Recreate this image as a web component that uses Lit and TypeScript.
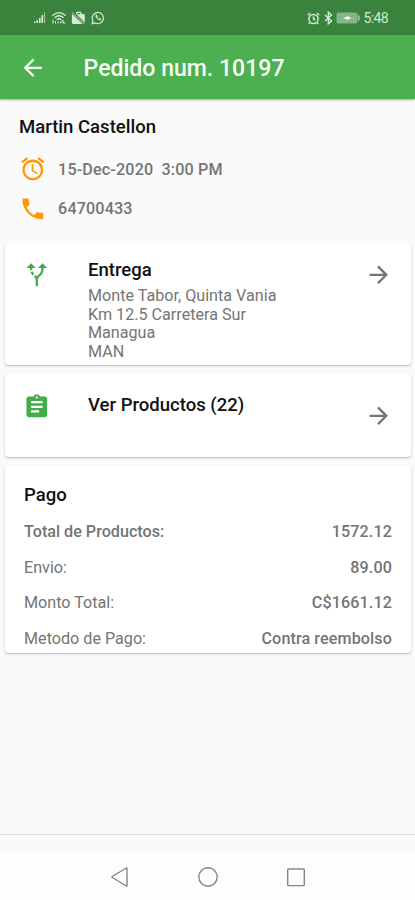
import { LitElement, html, css, svg } from "lit";
import { customElement, property } from "lit/decorators.js";

const ICONS: Record<string, string> = {
  back: "M20 11H7.83l5.59-5.59L12 4l-8 8 8 8 1.41-1.41L7.83 13H20v-2z",
  forward: "M12 4l-1.41 1.41L16.17 11H4v2h12.17l-5.58 5.59L12 20l8-8z",
  alarm:
    "M22 5.72l-4.6-3.86-1.29 1.53 4.6 3.86L22 5.72zM7.88 3.39L6.6 1.86 2 5.71l1.29 1.53 4.59-3.85zM12.5 8H11v6l4.75 2.85.75-1.23-4-2.37V8zM12 4c-4.97 0-9 4.03-9 9s4.02 9 9 9c4.97 0 9-4.03 9-9s-4.03-9-9-9zm0 16c-3.87 0-7-3.13-7-7s3.13-7 7-7 7 3.13 7 7-3.13 7-7 7z",
  phone:
    "M6.62 10.79c1.44 2.83 3.76 5.14 6.59 6.59l2.2-2.2c.27-.27.67-.36 1.02-.24 1.12.37 2.33.57 3.57.57.55 0 1 .45 1 1V20c0 .55-.45 1-1 1-9.39 0-17-7.61-17-17 0-.55.45-1 1-1h3.5c.55 0 1 .45 1 1 0 1.25.2 2.45.57 3.57.11.35.03.74-.25 1.02l-2.2 2.2z",
  route:
    "M9.78 11.16l-1.42 1.42c-.68-.69-1.34-1.58-1.79-2.94l1.94-.49c.32.89.77 1.5 1.27 2.01zM11 6L7 2 3 6h3.02c.02.81.08 1.54.19 2.17l1.94-.49C8.08 7.2 8.03 6.63 8.02 6H11zm10 0l-4-4-4 4h2.99c-.1 3.68-1.28 4.75-2.54 5.88-.5.44-1.01.92-1.45 1.55-.34-.49-.73-.88-1.13-1.24L9.46 13.6c.93.85 1.54 1.54 1.54 3.4v5h2v-5c0-2.02.71-2.66 1.79-3.63 1.38-1.24 3.08-2.78 3.2-7.37H21z",
  assignment:
    "M19 3h-4.18C14.4 1.84 13.3 1 12 1c-1.3 0-2.4.84-2.82 2H5c-1.1 0-2 .9-2 2v14c0 1.1.9 2 2 2h14c1.1 0 2-.9 2-2V5c0-1.1-.9-2-2-2zm-7 0c.55 0 1 .45 1 1s-.45 1-1 1-1-.45-1-1 .45-1 1-1zm2 14H7v-2h7v2zm3-4H7v-2h10v2zm0-4H7V7h10v2z",
};

@customElement("md-icon")
export class MdIcon extends LitElement {
  @property() name = "";
  static styles = css`
    :host { display: block; flex: none; width: 27.6px; height: 27.6px; }
    svg { display: block; width: 100%; height: 100%; fill: currentColor; }
  `;
  render() {
    return html`<svg viewBox="0 0 24 24">${svg`<path d=${ICONS[this.name]} />`}</svg>`;
  }
}

@customElement("status-bar")
export class StatusBar extends LitElement {
  static styles = css`
    :host {
      display: flex; justify-content: space-between; align-items: center;
      height: 35px; box-sizing: border-box; padding: 1px 27px 0 33px;
      background: #39833c; color: #d5ead6;
    }
    .group { display: flex; align-items: center; }
    svg { display: block; }
    .left { gap: 4.5px; }
    .alarm { margin-right: 4px; }
    .bt { margin-right: 3px; }
    .battery { margin-right: 4px; }
    .time { font-size: 14px; line-height: 16px; width: 24.5px; letter-spacing: -0.6px; white-space: nowrap; }
  `;
  render() {
    return html`
      <div class="group left">
        <svg width="13" height="14" viewBox="0 0 13 14" fill="currentColor">
          <path d="M1 10.5h1.6V12H1zM3.5 9h1.6v3H3.5zM6 7h1.6v5H6zM8.4 4.3H10V12H8.4z" />
          <path d="M10.8 1.5h1.3V12h-1.3z" opacity=".6" />
        </svg>
        <svg width="16" height="14" viewBox="0 0 16 14" fill="none" stroke="currentColor" stroke-width="1.3">
          <path d="M1.3 4.8Q8-1.5 14.7 4.8M3.5 6.8Q8 2.8 12.5 6.8M5.7 8.8Q8 6.8 10.3 8.8" />
          <path d="M2 8.5v4M4.5 10v2.5M7.2 10.5v2M9.3 12.2l1.5-2M12 9v3.5M12 12h2.5" stroke-width="1.1" />
        </svg>
        <svg width="15" height="14" viewBox="0 0 15 14" fill="currentColor">
          <path d="M4.200 3H5V1.800Q5 .7 6.100.7h3.200q1.100 0 1.100 1.100V3h2.200q1.200 0 1.200 1.200v7.600L5.500 3.200h3.500V2H6.300v1.200zM.9 2.800l10.800 10.100H2.100Q.9 12.900.9 11.700z" />
          <path d="M.9 1.200l12.800 12" fill="none" stroke="currentColor" stroke-width=".7" />
        </svg>
        <svg width="14" height="14" viewBox="0 0 14 14" fill="none" stroke="currentColor" stroke-width="1.2">
          <path d="M1.1 12.7l.8-3A5.6 5.6 0 1 1 4.2 12z" />
          <path d="M4.8 4q-.8 1.3.8 3.1t3.7 2.1l.9-1.1-1.5-.8-.8.7Q6.7 7.5 6.1 6.2l.5-.7-.7-1.5z" fill="currentColor" stroke-width=".4" />
        </svg>
      </div>
      <div class="group">
        <svg class="alarm" width="13" height="13" viewBox="0 0 13 13" fill="none" stroke="currentColor" stroke-width="1.5">
          <circle cx="6.5" cy="7" r="4.6" />
          <path d="M.8 3.2L3.200 1M12.200 3.200L9.800 1M6.500 4.500V7l1.700 1M2.800 10.800l-1 1.200M10.200 10.800l1 1.200" />
        </svg>
        <svg class="bt" width="9" height="14" viewBox="0 0 9 14" fill="none" stroke="currentColor" stroke-width="1.4">
          <path d="M1 4l6.500 6L4.300 12.800V1.200L7.500 4 1 10" />
        </svg>
        <svg class="battery" width="24" height="12" viewBox="0 0 24 12">
          <rect x=".5" y=".5" width="21" height="11" rx="2" fill="#84b586" />
          <path d="M22.200 3.500h1.300v5h-1.300z" fill="#bddabe" />
          <path d="M7 6l4-1.300.5-1 1.300 1.200L16 6l-3.700 1.300-.7 1L10.500 7.200z" fill="#fff" />
        </svg>
        <span class="time">5:48</span>
      </div>`;
  }
}

@customElement("app-root")
export class AppRoot extends LitElement {
  static styles = css`
    :host {
      display: flex; flex-direction: column; height: 900px; overflow: hidden;
      background: #fafafa; color: #757575;
      font-family: Roboto, sans-serif; font-size: 16.15px; line-height: 19px;
    }
    .bar {
      display: flex; align-items: center; height: 64px; flex: none; box-sizing: border-box;
      padding: 1px 19px 0; gap: 37px; background: #4caf50; color: #f6fff6;
      box-shadow: 0 1px 2px rgba(0, 0, 0, .35); z-index: 1;
    }
    .title { font-size: 23.05px; font-weight: 500; line-height: 30px; white-space: pre; padding-top: 2px; }
    .contact { padding: 17px 19px 0; height: 144px; box-sizing: border-box; flex: none; }
    .strong { color: #111; font-size: 18.55px; font-weight: 500; line-height: 22px; }
    .line { display: flex; align-items: center; gap: 11.5px; height: 39.3px; }
    .line md-icon { color: #ff9800; }
    .value { font-weight: 500; white-space: pre; letter-spacing: .14px; padding-top: 1px; }
    .name { margin-bottom: 11.4px; }
    .cards { display: flex; flex-direction: column; gap: 8.5px; padding: 0 4px 0 5px; }
    .card {
      background: #fff; border-radius: 3px; box-sizing: border-box;
      box-shadow: 0 1px 2px rgba(0, 0, 0, .28);
    }
    .nav { display: flex; align-items: flex-start; padding: 16px 18px 0; }
    .nav > md-icon:first-child { color: #43ab48; margin-top: 2px; }
    .text { flex: 1; margin-left: 37.4px; }
    .address { line-height: 18.6px; margin-top: 6px; white-space: pre-line; }
    .nav > .arrow { margin-top: 2px; }
    .delivery { height: 121.5px; }
    .products { height: 84px; padding-top: 21px; }
    .nav.products > md-icon:first-child { margin-top: -1px; }
    .nav.products > .arrow { margin-top: 8px; }
    .payment { height: 187px; padding: 18px 19px 0; }
    .rows { margin-top: 8px; }
    .row { display: flex; align-items: center; justify-content: space-between; height: 35.8px; }
    .bold { font-weight: 500; }
    .amount { letter-spacing: .1px; }
    .spacer { flex: 1; }
    .divider { height: 1px; background: #dcdcdc; }
    .system {
      display: flex; justify-content: center; align-items: center; gap: 66px;
      height: 65px; flex: none; box-sizing: border-box; padding: 19px 0 0;
      background: linear-gradient(#fafafa 17px, #fdfdfd 17px);
    }
    .system svg { display: block; fill: none; stroke: #858585; stroke-width: 1.4; }
  `;

  private rows = [
    { label: "Total de Productos:", value: "1572.12", bold: true },
    { label: "Envio:", value: "89.00", bold: false },
    { label: "Monto Total:", value: "C$1661.12", bold: false },
    { label: "Metodo de Pago:", value: "Contra reembolso", bold: false },
  ];

  render() {
    return html`
      <status-bar></status-bar>
      <header class="bar">
        <md-icon name="back"></md-icon>
        <span class="title">Pedido num. 10197</span>
      </header>
      <section class="contact">
        <div class="strong name">Martin Castellon</div>
        <div class="line"><md-icon name="alarm"></md-icon><span class="value">15-Dec-2020  3:00 PM</span></div>
        <div class="line"><md-icon name="phone"></md-icon><span class="value">64700433</span></div>
      </section>
      <main class="cards">
        <section class="card nav delivery">
          <md-icon name="route"></md-icon>
          <div class="text">
            <div class="strong">Entrega</div>
            <div class="address">${"Monte Tabor, Quinta Vania\nKm 12.5 Carretera Sur\nManagua\nMAN"}</div>
          </div>
          <md-icon class="arrow" name="forward"></md-icon>
        </section>
        <section class="card nav products">
          <md-icon name="assignment"></md-icon>
          <div class="text"><div class="strong">Ver Productos (22)</div></div>
          <md-icon class="arrow" name="forward"></md-icon>
        </section>
        <section class="card payment">
          <div class="strong">Pago</div>
          <div class="rows">
            ${this.rows.map(
              (r) => html`<div class="row">
                <span class=${r.bold ? "bold" : ""}>${r.label}</span><span class="bold amount">${r.value}</span>
              </div>`
            )}
          </div>
        </section>
      </main>
      <div class="spacer"></div>
      <div class="divider"></div>
      <nav class="system">
        <svg width="22" height="22" viewBox="0 0 22 22"><path d="M18 2.3v17.4q0 .6-.6.3L3.3 11.5q-.8-.5 0-1L17.4 2q.6-.3.6.3z" /></svg>
        <svg width="22" height="22" viewBox="0 0 22 22"><circle cx="11" cy="11" r="9.2" /></svg>
        <svg width="22" height="22" viewBox="0 0 22 22"><rect x="2.7" y="3" width="16.6" height="16.6" rx=".8" /></svg>
      </nav>`;
  }
}
